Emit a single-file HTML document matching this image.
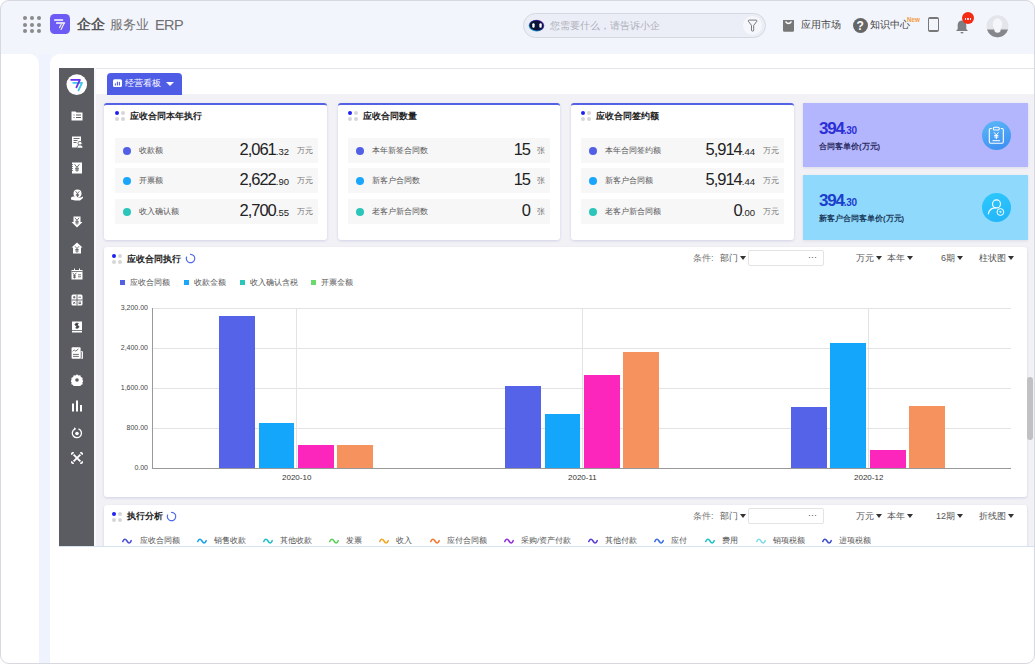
<!DOCTYPE html>
<html><head><meta charset="utf-8">
<style>
@font-face{font-family:"CJKW";src:local("Liberation Sans");unicode-range:U+3000-303F,U+4E00-9FFF,U+FF00-FFEF;size-adjust:137%}
*{margin:0;padding:0;box-sizing:border-box}
html,body{width:1035px;height:664px;overflow:hidden;background:#fff;font-family:"CJKW","Liberation Sans",sans-serif}
.a{position:absolute}
#frame{position:absolute;left:0;top:0;width:1035px;height:664px;border-radius:9px;background:#f3f5fd;overflow:hidden}
#bord{position:absolute;left:0;top:0;width:1035px;height:664px;border:1px solid #d8d9e0;border-radius:9px;pointer-events:none}
.hdr-dots i{position:absolute;width:4px;height:4px;border-radius:50%;background:#8a8a8a}
.t{position:absolute;white-space:nowrap;line-height:1}
.card{position:absolute;background:#fff;border-radius:3px;box-shadow:0 1px 3px rgba(80,80,170,.2)}
.card.top{border-top:2px solid #5662e6}
.dots4 i{position:absolute;width:4px;height:4px;border-radius:50%;background:#d6d6d6;margin-top:0.5px}
.dots4 i:first-child{background:#1e22f0}
.row{position:absolute;height:25px;background:#f7f7f8}
.row .d{position:absolute;left:8px;top:8.5px;width:8px;height:8px;border-radius:50%}
.row .lb{position:absolute;left:24px;top:8.5px;font-size:8px;color:#555;white-space:nowrap;line-height:1}
.row .num{position:absolute;right:29px;bottom:5.5px;font-size:16.5px;color:#222;white-space:nowrap;line-height:1;letter-spacing:-1px}
.row .num small{font-size:9.5px;letter-spacing:0}
.row .u{position:absolute;right:5px;top:9px;font-size:8px;color:#777;white-space:nowrap;line-height:1}
.sbi{position:absolute;left:70px;width:12px;height:12px}
.ctl{position:absolute;font-size:9px;color:#555;white-space:nowrap;line-height:1}
.car{display:inline-block;width:0;height:0;border-left:3px solid transparent;border-right:3px solid transparent;border-top:4px solid #333;margin-left:2px;vertical-align:1px}
.grid{position:absolute;left:153px;width:858px;height:1px;background:#e3e3e3}
.yl{position:absolute;right:887px;font-size:7px;color:#444;line-height:1;white-space:nowrap}
.bar{position:absolute}
.lg{position:absolute;top:280px;width:5px;height:5px}
.lgt{position:absolute;top:279px;font-size:7.6px;color:#555;line-height:1;white-space:nowrap}
.wv{position:absolute;top:536.5px;width:10px;height:8px}
.wvt{position:absolute;top:537px;font-size:8px;color:#555;line-height:1;white-space:nowrap}
</style></head><body>
<div id="frame">
  <!-- header -->
  <div class="hdr-dots"><i style="left:23px;top:16.4px"></i><i style="left:30px;top:16.4px"></i><i style="left:37px;top:16.4px"></i><i style="left:23px;top:22.8px"></i><i style="left:30px;top:22.8px"></i><i style="left:37px;top:22.8px"></i><i style="left:23px;top:29.2px"></i><i style="left:30px;top:29.2px"></i><i style="left:37px;top:29.2px"></i></div>
  <div class="a" style="left:50px;top:14px;width:20px;height:20px;border-radius:4.5px;background:#6c5bf5"></div>
  <svg class="a" style="left:50px;top:14px" width="20" height="20" viewBox="0 0 20 20"><path d="M4.8 6h7.6M6.8 9h7.6" stroke="#fff" stroke-width="1.7" stroke-linecap="round"/><path d="M11.5 9.8l-1.9 3.8M13.9 9.8l-2.8 5.6" stroke="#f4f2dc" stroke-width="1.2" stroke-linecap="round"/></svg>
  <div class="t" style="left:77px;top:17.5px;font-size:13.8px;font-weight:bold;color:#555">企企</div>
  <div class="t" style="left:110px;top:18px;font-size:13.2px;color:#707070">服务业</div><div class="t" style="left:155px;top:18px;font-size:14.5px;color:#707070;letter-spacing:-0.6px">ERP</div>

  <!-- search -->
  <div class="a" style="left:523px;top:13px;width:243px;height:25px;border-radius:13px;background:#eceef7;border:1.4px solid #d6d8e0"></div>
  <svg class="a" style="left:527px;top:18px" width="19" height="15" viewBox="0 0 19 15"><defs><linearGradient id="rg" x1="0" y1="1" x2="1" y2="0"><stop offset="0" stop-color="#30e0f0"/><stop offset="0.5" stop-color="#1a2a90"/><stop offset="1" stop-color="#b040f0"/></linearGradient></defs><ellipse cx="9.5" cy="7.6" rx="7.8" ry="5.9" fill="url(#rg)"/><ellipse cx="9.5" cy="7.5" rx="6.9" ry="5" fill="#0a1238"/><rect x="5.3" y="5.2" width="2.3" height="4.6" rx="1.1" fill="#fff"/><rect x="12.4" y="5.2" width="2.3" height="4.6" rx="1.1" fill="#fff"/></svg>
  <div class="t" style="left:550px;top:20.5px;font-size:10px;color:#aeb0ba">您需要什么，请告诉小企</div>
  <div class="a" style="left:743px;top:16px;width:19px;height:19px;border-radius:50%;background:#f6f7fc"></div>
  <svg class="a" style="left:747px;top:19px" width="12" height="13" viewBox="0 0 12 13"><path d="M1.3 2.2Q1 1.1 2.2 1.1h6.8Q10.2 1.1 9.9 2.2L6.7 6.4v4.8q0 0.9-0.9 0.9h-0.4q-0.9 0-0.9-0.9V6.4z" stroke="#6a6a6a" stroke-width="0.9" fill="none" stroke-linejoin="round"/></svg>

  <svg class="a" style="left:782px;top:19px" width="13" height="13" viewBox="0 0 13 13"><path d="M1 1h11v10.5a1.3 1.3 0 0 1-1.3 1.3h-8.4A1.3 1.3 0 0 1 1 11.5z" fill="#777"/><path d="M3.5 2.5q3 4 6 0" stroke="#fff" stroke-width="1.3" fill="none"/></svg>
  <div class="t" style="left:801px;top:20px;font-size:10px;color:#444">应用市场</div>
  <div class="a" style="left:853px;top:18px;width:15px;height:15px;border-radius:50%;background:#666"></div>
  <div class="t" style="left:856.5px;top:20px;font-size:12px;font-weight:bold;color:#fff">?</div>
  <div class="t" style="left:870px;top:20px;font-size:10px;color:#444">知识中心</div>
  <div class="t" style="left:907px;top:17px;font-size:6.3px;font-weight:bold;color:#f59a3c">New</div>
  <div class="a" style="left:928px;top:17px;width:11px;height:15px;border:1.6px solid #777;border-top-width:2px;border-bottom-width:2.5px;border-radius:2px"></div>
  <svg class="a" style="left:955px;top:19px" width="14" height="15" viewBox="0 0 14 15"><path d="M7 1.5c-3 0-4.3 2.3-4.3 5v3.5L1 12h12l-1.7-2V6.5C11.3 3.8 10 1.5 7 1.5z" fill="#7e7f83"/><path d="M5.5 13h3a1.5 1.5 0 0 1-3 0z" fill="#7e7f83"/></svg>
  <div class="a" style="left:961.5px;top:11.8px;width:12px;height:12px;border-radius:50%;background:#f52c14"></div>
  <div class="a" style="left:964.6px;top:18.2px;width:1.6px;height:1.6px;background:#fde"></div><div class="a" style="left:967.2px;top:18.2px;width:1.6px;height:1.6px;background:#fde"></div><div class="a" style="left:969.8px;top:18.2px;width:1.6px;height:1.6px;background:#fde"></div>
  <svg class="a" style="left:986px;top:15px" width="23" height="23" viewBox="0 0 23 23"><defs><clipPath id="avc"><circle cx="11.5" cy="11.3" r="11"/></clipPath></defs><g clip-path="url(#avc)"><rect width="23" height="23" fill="#e3e5ea"/><path d="M0 14.6L23 14.6 23 23 0 23z" fill="#86878c"/><circle cx="11.5" cy="14.6" r="3.2" fill="#f5f6fa"/><ellipse cx="11.5" cy="9.2" rx="4.7" ry="5.9" fill="#f5f6fa"/><path d="M0 23h23" stroke="#86878c"/></g></svg>
  <!-- body panels -->
  <div class="a" style="left:0;top:54px;width:39px;height:620px;background:#fff;border-top-right-radius:10px"></div>
  <div class="a" style="left:50px;top:54px;width:990px;height:620px;background:#fff;border-top-left-radius:10px;border-top-right-radius:10px"></div>

  <!-- dashboard -->
  <div class="a" style="left:59px;top:68px;width:975px;height:1px;background:#e6e6ea"></div>
  <div class="a" style="left:95px;top:94px;width:939px;height:452px;background:#f2f2f6"></div>
  <div class="a" style="left:94px;top:68px;width:2px;height:478px;background:#f9f9fb"></div>
  <div class="a" style="left:59px;top:68px;width:35px;height:478px;background:#5b5c61"></div>
  <div class="a" style="left:59px;top:546px;width:975px;height:1px;background:#d6e2ee"></div>

  <!-- sidebar logo -->
  <svg class="a" style="left:64px;top:72px" width="26" height="26" viewBox="0 0 26 26"><circle cx="12.8" cy="12.6" r="10.3" fill="#fff"/><path d="M9.2 10.8h8.8l-3.5 7.6" stroke="#3ec6ee" stroke-width="1.8" fill="none" stroke-linecap="round" stroke-linejoin="round"/><path d="M7.1 7.8h8.8l-3.5 7.5" stroke="#6a2ef0" stroke-width="1.8" fill="none" stroke-linecap="round" stroke-linejoin="round"/></svg>
  <svg class="a" style="left:70.5px;top:109.5px" width="12" height="12" viewBox="0 0 12 12"><path d="M0.5 1.5h4l1 1h6v8h-11z" fill="#fff"/><path d="M2.5 5h1M5 5h5M2.5 7.5h1M5 7.5h5" stroke="#5b5c61" stroke-width="1.1"/></svg>
<svg class="a" style="left:70.5px;top:136px" width="12" height="12" viewBox="0 0 12 12"><path d="M1 0.5h9v5l-2 2v4h-7z" fill="#fff"/><path d="M2.5 2.5h6M2.5 4.5h4M2.5 6.5h3" stroke="#5b5c61" stroke-width="0.9"/><circle cx="9" cy="7.3" r="2" fill="#fff" stroke="#5b5c61" stroke-width="0.8"/><path d="M6 12.2c0-2.2 1.2-3.3 3-3.3s3 1.1 3 3.3z" fill="#fff" stroke="#5b5c61" stroke-width="0.8"/></svg>
<svg class="a" style="left:70.5px;top:162.3px" width="12" height="12" viewBox="0 0 12 12"><path d="M1 0.5h10v11h-10z" fill="#fff"/><path d="M1.5 2v8" stroke="#5b5c61" stroke-width="0.8" stroke-dasharray="1 1"/><path d="M3.6 2.3L6 5.3 8.4 2.3M6 5.3v4.5M4 6.3h4M4 8h4" stroke="#5b5c61" stroke-width="0.9" fill="none"/></svg>
<svg class="a" style="left:70.5px;top:189px" width="12" height="12" viewBox="0 0 12 12"><circle cx="6.5" cy="4.5" r="4" fill="#fff"/><path d="M4.6 2.2L6.5 4.5 8.4 2.2M6.5 4.5v3.5M4.9 5.3h3.2M4.9 6.7h3.2" stroke="#5b5c61" stroke-width="0.85" fill="none"/><path d="M0 8.5l2-1h3l2 1h3l2-1v1.5l-3 2.5h-5l-4-1z" fill="#fff"/></svg>
<svg class="a" style="left:70.5px;top:215.5px" width="12" height="12" viewBox="0 0 12 12"><path d="M2.5 0.5h7v5.5h2l-5.5 5.5-5.5-5.5h2z" fill="#fff"/><path d="M3.9 1.8L6 4.3 8.1 1.8M6 4.3v4.5M4.2 5.3h3.6M4.2 6.9h3.6" stroke="#5b5c61" stroke-width="0.85" fill="none"/></svg>
<svg class="a" style="left:70.5px;top:242px" width="12" height="12" viewBox="0 0 12 12"><path d="M6 0.5l5.5 5h-1.5v6h-8v-6h-1.5z" fill="#fff"/><path d="M4 4.3L6 6.6 8 4.3M6 6.6v4.2M4.3 7.5h3.4M4.3 9h3.4" stroke="#5b5c61" stroke-width="0.85" fill="none"/></svg>
<svg class="a" style="left:70.5px;top:268px" width="12" height="12" viewBox="0 0 12 12"><path d="M0.5 2h11v9.5h-11z" fill="#fff"/><path d="M0.5 3.5h11" stroke="#5b5c61" stroke-width="0.8"/><path d="M3.5 0.5v2M8.5 0.5v2" stroke="#fff" stroke-width="1"/><path d="M1.7 4.8L3.5 7 5.3 4.8M3.5 7v3.5M2 7.8h3M2 9.2h3M7 6.8h3M7 8.8h3" stroke="#5b5c61" stroke-width="0.85" fill="none"/></svg>
<svg class="a" style="left:70.5px;top:294px" width="12" height="12" viewBox="0 0 12 12"><rect x="0.5" y="0.5" width="11" height="11" rx="1.5" fill="#fff"/><path d="M6 0.5v11M0.5 6h11" stroke="#5b5c61" stroke-width="0.9"/><path d="M2 3.2h2.5M3.2 2v2.5M7.5 3.2h2.5M2.2 7.8l2 2M4.2 7.8l-2 2M7.5 8.2h2.5M7.5 9.6h2.5" stroke="#5b5c61" stroke-width="0.9"/></svg>
<svg class="a" style="left:70.5px;top:321px" width="12" height="12" viewBox="0 0 12 12"><path d="M1 0.5h10v11h-10z" fill="#fff"/><path d="M1 9.5h10" stroke="#5b5c61" stroke-width="0.8"/><path d="M7.5 2.5h-2.3a1.1 1.1 0 0 0 0 2.2h1.6a1.1 1.1 0 0 1 0 2.2h-2.3M6 1.5v6.5" stroke="#5b5c61" stroke-width="1"/></svg>
<svg class="a" style="left:70.5px;top:347px" width="12" height="12" viewBox="0 0 12 12"><rect x="0.6" y="0.3" width="9" height="11.5" rx="1" fill="#fff"/><path d="M9.6 4.2h1.8a0.6 0.6 0 0 1 0.6 0.6v6.4a0.6 0.6 0 0 1-0.6 0.6h-1.8z" fill="#fff"/><path d="M10.6 5v6.3" stroke="#5b5c61" stroke-width="0.7"/><path d="M1.8 4.4l1.5-1.5 1.5 1.3 2.6-2.2M2 7.4h5.8M2 9.4h5.8" stroke="#5b5c61" stroke-width="0.9" fill="none"/></svg>
<svg class="a" style="left:70.5px;top:373.5px" width="12" height="12" viewBox="0 0 12 12"><path d="M6 0.3l1.4 1.3 1.9-0.3 0.6 1.8 1.8 0.8-0.3 1.9 1.2 1.2-1.2 1.3 0.3 1.9-1.8 0.7-0.6 1.8-1.9-0.3-1.4 1.3-1.4-1.3-1.9 0.3-0.6-1.8-1.8-0.7 0.3-1.9-1.2-1.3 1.2-1.2-0.3-1.9 1.8-0.8 0.6-1.8 1.9 0.3z" fill="#fff"/><circle cx="6" cy="6" r="1.8" fill="#5b5c61"/></svg>
<svg class="a" style="left:70.5px;top:400px" width="12" height="12" viewBox="0 0 12 12"><rect x="1" y="3.5" width="2" height="8" fill="#fff"/><rect x="5" y="0.5" width="2" height="11" fill="#fff"/><rect x="9" y="5" width="2" height="6.5" fill="#fff"/></svg>
<svg class="a" style="left:70.5px;top:426.7px" width="12" height="12" viewBox="0 0 12 12"><path d="M7.5 1.8A4.6 4.6 0 1 1 4 1.9" stroke="#fff" stroke-width="1.3" fill="none"/><path d="M3 0.3l2.2 1.5-1.8 1.8z" fill="#fff"/><circle cx="6" cy="6.5" r="1.8" fill="#fff"/></svg>
<svg class="a" style="left:70.5px;top:452.4px" width="12" height="12" viewBox="0 0 12 12"><path d="M2.6 2.6l6.8 6.8M9.4 2.6l-6.8 6.8" stroke="#fff" stroke-width="1.8"/><path d="M0.6 2.8a2 2 0 0 1 2.2-2.2M9.2 0.6a2 2 0 0 1 2.2 2.2M11.4 9.2a2 2 0 0 1-2.2 2.2M2.8 11.4a2 2 0 0 1-2.2-2.2" stroke="#fff" stroke-width="1.6" fill="none"/></svg>
  <!-- tab -->
  <div class="a" style="left:107px;top:73px;width:75px;height:22px;background:#4f5de6;border-radius:4px 4px 0 0"></div>
  <svg class="a" style="left:112px;top:78px" width="11" height="10" viewBox="0 0 11 10"><rect x="1" y="1.3" width="9" height="7.7" rx="1.5" fill="#fff"/><path d="M3.4 5.8v1.2M5.4 4v3M7.4 4.2v2.8" stroke="#4f5de6" stroke-width="1.1" stroke-linecap="round"/></svg>
  <div class="t" style="left:125px;top:79px;font-size:9px;color:#fff">经营看板</div>
  <div class="a" style="left:166px;top:82px;width:0;height:0;border-left:4px solid transparent;border-right:4px solid transparent;border-top:4px solid #fff"></div>

  <!-- card 1 -->
  <div class="card top" style="left:104px;top:103px;width:223px;height:137px"></div>
  <div class="dots4"><i style="left:115px;top:110px"></i><i style="left:121px;top:110px"></i><i style="left:115px;top:116px"></i><i style="left:121px;top:116px"></i></div>
  <div class="t" style="left:130px;top:111.5px;font-size:9px;font-weight:bold;color:#222">应收合同本年执行</div>
  <div class="row" style="left:115px;top:138px;width:203px"><i class="d" style="background:#5260e6"></i><span class="lb">收款额</span><span class="num">2,061<small>.32</small></span><span class="u">万元</span></div>
  <div class="row" style="left:115px;top:168px;width:203px"><i class="d" style="background:#1aa6fb"></i><span class="lb">开票额</span><span class="num">2,622<small>.90</small></span><span class="u">万元</span></div>
  <div class="row" style="left:115px;top:199px;width:203px"><i class="d" style="background:#2bc6b9"></i><span class="lb">收入确认额</span><span class="num">2,700<small>.55</small></span><span class="u">万元</span></div>

  <!-- card 2 -->
  <div class="card top" style="left:338px;top:103px;width:222px;height:137px"></div>
  <div class="dots4"><i style="left:348px;top:110px"></i><i style="left:354px;top:110px"></i><i style="left:348px;top:116px"></i><i style="left:354px;top:116px"></i></div>
  <div class="t" style="left:363px;top:111.5px;font-size:9px;font-weight:bold;color:#222">应收合同数量</div>
  <div class="row" style="left:348px;top:138px;width:202px"><i class="d" style="background:#5260e6"></i><span class="lb">本年新签合同数</span><span class="num" style="right:20px">15</span><span class="u">张</span></div>
  <div class="row" style="left:348px;top:168px;width:202px"><i class="d" style="background:#1aa6fb"></i><span class="lb">新客户合同数</span><span class="num" style="right:20px">15</span><span class="u">张</span></div>
  <div class="row" style="left:348px;top:199px;width:202px"><i class="d" style="background:#2bc6b9"></i><span class="lb">老客户新合同数</span><span class="num" style="right:20px">0</span><span class="u">张</span></div>

  <!-- card 3 -->
  <div class="card top" style="left:571px;top:103px;width:223px;height:137px"></div>
  <div class="dots4"><i style="left:581px;top:110px"></i><i style="left:587px;top:110px"></i><i style="left:581px;top:116px"></i><i style="left:587px;top:116px"></i></div>
  <div class="t" style="left:596px;top:111.5px;font-size:9px;font-weight:bold;color:#222">应收合同签约额</div>
  <div class="row" style="left:581px;top:138px;width:203px"><i class="d" style="background:#5260e6"></i><span class="lb">本年合同签约额</span><span class="num">5,914<small>.44</small></span><span class="u">万元</span></div>
  <div class="row" style="left:581px;top:168px;width:203px"><i class="d" style="background:#1aa6fb"></i><span class="lb">新客户合同额</span><span class="num">5,914<small>.44</small></span><span class="u">万元</span></div>
  <div class="row" style="left:581px;top:199px;width:203px"><i class="d" style="background:#2bc6b9"></i><span class="lb">老客户新合同额</span><span class="num">0<small>.00</small></span><span class="u">万元</span></div>

  <!-- purple/cyan cards -->
  <div class="a" style="left:803px;top:103px;width:225px;height:64px;background:#b3b6fd;box-shadow:0 1px 3px rgba(90,90,140,.15)"></div>
  <div class="t" style="left:819px;top:119.5px;font-size:17px;font-weight:bold;color:#2c30d6;letter-spacing:-1.2px">394<small style="font-size:10px;letter-spacing:-0.3px">.30</small></div>
  <div class="t" style="left:819px;top:143px;font-size:7.6px;font-weight:bold;color:#2a2a60">合同客单价(万元)</div>
  <div class="a" style="left:982px;top:120.5px;width:29px;height:29px;border-radius:50%;background:linear-gradient(160deg,#5cb8f8,#3a8cf0)"></div>
  <svg class="a" style="left:982px;top:120px" width="30" height="30" viewBox="0 0 30 30"><path d="M9.8 8.5h-1.3a1.2 1.2 0 0 0-1.2 1.2v12.4a1.2 1.2 0 0 0 1.2 1.2h11.6a1.2 1.2 0 0 0 1.2-1.2V9.7a1.2 1.2 0 0 0-1.2-1.2h-1.3" stroke="#fff" stroke-width="1.1" fill="none"/><rect x="11.3" y="7.2" width="6" height="2.8" rx="1.3" stroke="#fff" stroke-width="1.1" fill="none"/><path d="M12 12.3l2.3 2.6 2.3-2.6M14.3 14.9v4.2M12.2 15.4h4.2M12.2 17h4.2M10.5 20.7h7.6" stroke="#fff" stroke-width="1" fill="none"/></svg>

  <div class="a" style="left:803px;top:175px;width:225px;height:65px;background:#8fd9fd;box-shadow:0 1px 3px rgba(90,90,140,.15)"></div>
  <div class="t" style="left:819px;top:191.5px;font-size:17px;font-weight:bold;color:#1c3fcc;letter-spacing:-1.2px">394<small style="font-size:10px;letter-spacing:-0.3px">.30</small></div>
  <div class="t" style="left:819px;top:215px;font-size:7.6px;font-weight:bold;color:#1a3a5a">新客户合同客单价(万元)</div>
  <div class="a" style="left:982px;top:192.5px;width:29px;height:29px;border-radius:50%;background:linear-gradient(160deg,#2ec8fc,#22b4f8)"></div>
  <svg class="a" style="left:982px;top:192px" width="30" height="30" viewBox="0 0 30 30"><circle cx="14.5" cy="11.9" r="4" stroke="#fff" stroke-width="1.2" fill="none"/><path d="M6.3 21.8c0.8-3.5 3.5-6 7.2-6" stroke="#fff" stroke-width="1.2" fill="none" stroke-linecap="round"/><circle cx="18.4" cy="20" r="3.4" stroke="#fff" stroke-width="1" fill="#2cc0f8"/><path d="M17 19.2h2.8l-1.4 1.9z" fill="#fff"/></svg>

  <!-- chart card -->
  <div class="card" style="left:104px;top:247px;width:923px;height:250px"></div>
  <div class="dots4"><i style="left:112px;top:253px"></i><i style="left:118px;top:253px"></i><i style="left:112px;top:259px"></i><i style="left:118px;top:259px"></i></div>
  <div class="t" style="left:127px;top:254.5px;font-size:9px;font-weight:bold;color:#222">应收合同执行</div>
  <svg class="a" style="left:185px;top:253px" width="11" height="11" viewBox="0 0 11 11"><path d="M5.5 1.3A4.2 4.2 0 1 1 1.6 4" stroke="#4f6ae8" stroke-width="1.2" fill="none" stroke-linecap="round"/></svg>

  <div class="ctl" style="left:693px;top:254px;color:#777">条件:</div>
  <div class="ctl" style="left:720px;top:254px">部门<span class="car"></span></div>
  <div class="a" style="left:748px;top:250px;width:76px;height:16px;border:1px solid #e3e3e3;border-radius:2px;background:#fff"></div>
  <div class="ctl" style="left:808px;top:253px;color:#555">···</div>
  <div class="ctl" style="left:856px;top:254px">万元<span class="car"></span></div>
  <div class="ctl" style="left:887px;top:254px">本年<span class="car"></span></div>
  <div class="ctl" style="left:941px;top:254px">6期<span class="car"></span></div>
  <div class="ctl" style="left:979px;top:254px">柱状图<span class="car"></span></div>

  <div class="lg" style="left:120px;background:#5260e6"></div><div class="lgt" style="left:130px">应收合同额</div>
  <div class="lg" style="left:184px;background:#1aa6fb"></div><div class="lgt" style="left:194px">收款金额</div>
  <div class="lg" style="left:240px;background:#2bc6b9"></div><div class="lgt" style="left:250px">收入确认含税</div>
  <div class="lg" style="left:311px;background:#6bd96b"></div><div class="lgt" style="left:321px">开票金额</div>

  <!-- grid -->
  <div class="grid" style="top:308px"></div>
  <div class="grid" style="top:348px"></div>
  <div class="grid" style="top:388px"></div>
  <div class="grid" style="top:428px"></div>
  <div class="a" style="left:296px;top:308px;width:1px;height:160px;background:#e3e3e3"></div>
  <div class="a" style="left:582px;top:308px;width:1px;height:160px;background:#e3e3e3"></div>
  <div class="a" style="left:868px;top:308px;width:1px;height:160px;background:#e3e3e3"></div>
  <div class="yl" style="top:304px">3,200.00</div>
  <div class="yl" style="top:344px">2,400.00</div>
  <div class="yl" style="top:384px">1,600.00</div>
  <div class="yl" style="top:424px">800.00</div>
  <div class="yl" style="top:464px">0.00</div>

  <div class="bar" style="left:219px;top:316px;width:36px;height:152px;background:#5563e8"></div>
  <div class="bar" style="left:259px;top:423px;width:35px;height:45px;background:#14a6fb"></div>
  <div class="bar" style="left:298px;top:445px;width:36px;height:23px;background:#fc26bd"></div>
  <div class="bar" style="left:337px;top:445px;width:36px;height:23px;background:#f5925e"></div>

  <div class="bar" style="left:505px;top:386px;width:36px;height:82px;background:#5563e8"></div>
  <div class="bar" style="left:545px;top:414px;width:35px;height:54px;background:#14a6fb"></div>
  <div class="bar" style="left:584px;top:375px;width:36px;height:93px;background:#fc26bd"></div>
  <div class="bar" style="left:623px;top:352px;width:36px;height:116px;background:#f5925e"></div>

  <div class="bar" style="left:791px;top:407px;width:36px;height:61px;background:#5563e8"></div>
  <div class="bar" style="left:830px;top:343px;width:36px;height:125px;background:#14a6fb"></div>
  <div class="bar" style="left:870px;top:450px;width:36px;height:18px;background:#fc26bd"></div>
  <div class="bar" style="left:909px;top:406px;width:36px;height:62px;background:#f5925e"></div>

  <div class="a" style="left:152px;top:308px;width:1px;height:160px;background:#999"></div>
  <div class="a" style="left:152px;top:468px;width:859px;height:1px;background:#999"></div>
  <div class="t" style="left:282px;top:474px;font-size:8px;color:#333">2020-10</div>
  <div class="t" style="left:568px;top:474px;font-size:8px;color:#333">2020-11</div>
  <div class="t" style="left:854px;top:474px;font-size:8px;color:#333">2020-12</div>

  <!-- second card -->
  <div class="card" style="left:104px;top:505px;width:923px;height:60px"></div>
  <div class="dots4"><i style="left:112px;top:511px"></i><i style="left:118px;top:511px"></i><i style="left:112px;top:517px"></i><i style="left:118px;top:517px"></i></div>
  <div class="t" style="left:127px;top:512px;font-size:9px;font-weight:bold;color:#222">执行分析</div>
  <svg class="a" style="left:166px;top:511px" width="11" height="11" viewBox="0 0 11 11"><path d="M5.5 1.3A4.2 4.2 0 1 1 1.6 4" stroke="#4f6ae8" stroke-width="1.2" fill="none" stroke-linecap="round"/></svg>
  <div class="ctl" style="left:693px;top:512px;color:#777">条件:</div>
  <div class="ctl" style="left:720px;top:512px">部门<span class="car"></span></div>
  <div class="a" style="left:748px;top:508px;width:76px;height:16px;border:1px solid #e3e3e3;border-radius:2px;background:#fff"></div>
  <div class="ctl" style="left:808px;top:511px;color:#555">···</div>
  <div class="ctl" style="left:856px;top:512px">万元<span class="car"></span></div>
  <div class="ctl" style="left:887px;top:512px">本年<span class="car"></span></div>
  <div class="ctl" style="left:936px;top:512px">12期<span class="car"></span></div>
  <div class="ctl" style="left:979px;top:512px">折线图<span class="car"></span></div>

  <svg class="wv" style="left:122.4px" width="10" height="8" viewBox="0 0 10 8"><path d="M0.8 4.5C2 1.5 3.5 1.5 5 4s3 2.8 4.2-0.3" stroke="#4b4fd8" stroke-width="1.6" fill="none" stroke-linecap="round"/></svg><div class="wvt" style="left:140px">应收合同额</div><svg class="wv" style="left:196.7px" width="10" height="8" viewBox="0 0 10 8"><path d="M0.8 4.5C2 1.5 3.5 1.5 5 4s3 2.8 4.2-0.3" stroke="#1aa0f0" stroke-width="1.6" fill="none" stroke-linecap="round"/></svg><div class="wvt" style="left:213.6px">销售收款</div><svg class="wv" style="left:262.6px" width="10" height="8" viewBox="0 0 10 8"><path d="M0.8 4.5C2 1.5 3.5 1.5 5 4s3 2.8 4.2-0.3" stroke="#22c0c8" stroke-width="1.6" fill="none" stroke-linecap="round"/></svg><div class="wvt" style="left:279.6px">其他收款</div><svg class="wv" style="left:328.5px" width="10" height="8" viewBox="0 0 10 8"><path d="M0.8 4.5C2 1.5 3.5 1.5 5 4s3 2.8 4.2-0.3" stroke="#5bd35b" stroke-width="1.6" fill="none" stroke-linecap="round"/></svg><div class="wvt" style="left:345.5px">发票</div><svg class="wv" style="left:379.4px" width="10" height="8" viewBox="0 0 10 8"><path d="M0.8 4.5C2 1.5 3.5 1.5 5 4s3 2.8 4.2-0.3" stroke="#f5a623" stroke-width="1.6" fill="none" stroke-linecap="round"/></svg><div class="wvt" style="left:396.4px">收入</div><svg class="wv" style="left:430.3px" width="10" height="8" viewBox="0 0 10 8"><path d="M0.8 4.5C2 1.5 3.5 1.5 5 4s3 2.8 4.2-0.3" stroke="#f57a30" stroke-width="1.6" fill="none" stroke-linecap="round"/></svg><div class="wvt" style="left:447.2px">应付合同额</div><svg class="wv" style="left:504px" width="10" height="8" viewBox="0 0 10 8"><path d="M0.8 4.5C2 1.5 3.5 1.5 5 4s3 2.8 4.2-0.3" stroke="#9230d8" stroke-width="1.6" fill="none" stroke-linecap="round"/></svg><div class="wvt" style="left:520.9px">采购/资产付款</div><svg class="wv" style="left:588px" width="10" height="8" viewBox="0 0 10 8"><path d="M0.8 4.5C2 1.5 3.5 1.5 5 4s3 2.8 4.2-0.3" stroke="#5a3fd6" stroke-width="1.6" fill="none" stroke-linecap="round"/></svg><div class="wvt" style="left:605px">其他付款</div><svg class="wv" style="left:653.9px" width="10" height="8" viewBox="0 0 10 8"><path d="M0.8 4.5C2 1.5 3.5 1.5 5 4s3 2.8 4.2-0.3" stroke="#3a6fe0" stroke-width="1.6" fill="none" stroke-linecap="round"/></svg><div class="wvt" style="left:670.9px">应付</div><svg class="wv" style="left:704.8px" width="10" height="8" viewBox="0 0 10 8"><path d="M0.8 4.5C2 1.5 3.5 1.5 5 4s3 2.8 4.2-0.3" stroke="#22c4c4" stroke-width="1.6" fill="none" stroke-linecap="round"/></svg><div class="wvt" style="left:721.7px">费用</div><svg class="wv" style="left:755.6px" width="10" height="8" viewBox="0 0 10 8"><path d="M0.8 4.5C2 1.5 3.5 1.5 5 4s3 2.8 4.2-0.3" stroke="#80dce8" stroke-width="1.6" fill="none" stroke-linecap="round"/></svg><div class="wvt" style="left:772.6px">销项税额</div><svg class="wv" style="left:821.6px" width="10" height="8" viewBox="0 0 10 8"><path d="M0.8 4.5C2 1.5 3.5 1.5 5 4s3 2.8 4.2-0.3" stroke="#3b4fc9" stroke-width="1.6" fill="none" stroke-linecap="round"/></svg><div class="wvt" style="left:838.5px">进项税额</div>

  <!-- scrollbar -->
  
  <div class="a" style="left:1027px;top:377px;width:6px;height:63px;border-radius:3px;background:#c1c1c4"></div>

  <!-- bottom white cover below dashboard -->
  <div class="a" style="left:50px;top:547px;width:990px;height:120px;background:#fff"></div>
  <div class="a" style="left:59px;top:546px;width:975px;height:1px;background:#d6e2ee"></div>
  <div class="a" style="left:39px;top:54px;width:11px;height:620px;background:#eff3fd"></div>
</div>
<div id="bord"></div>
</body></html>
